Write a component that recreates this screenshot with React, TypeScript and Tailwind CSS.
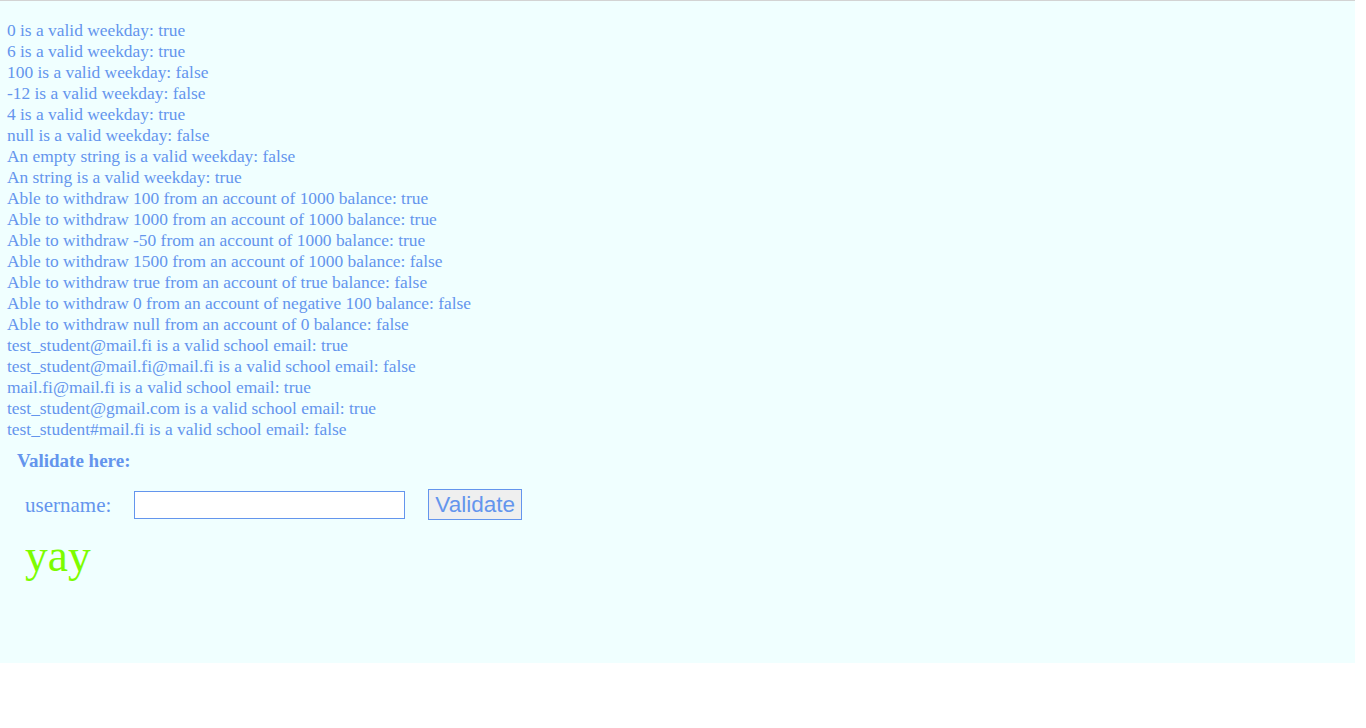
const lines = [
  "0 is a valid weekday: true",
  "6 is a valid weekday: true",
  "100 is a valid weekday: false",
  "-12 is a valid weekday: false",
  "4 is a valid weekday: true",
  "null is a valid weekday: false",
  "An empty string is a valid weekday: false",
  "An string is a valid weekday: true",
  "Able to withdraw 100 from an account of 1000 balance: true",
  "Able to withdraw 1000 from an account of 1000 balance: true",
  "Able to withdraw -50 from an account of 1000 balance: true",
  "Able to withdraw 1500 from an account of 1000 balance: false",
  "Able to withdraw true from an account of true balance: false",
  "Able to withdraw 0 from an account of negative 100 balance: false",
  "Able to withdraw null from an account of 0 balance: false",
  "test_student@mail.fi is a valid school email: true",
  "test_student@mail.fi@mail.fi is a valid school email: false",
  "mail.fi@mail.fi is a valid school email: true",
  "test_student@gmail.com is a valid school email: true",
  "test_student#mail.fi is a valid school email: false",
];

export default function App() {
  return (
    <div className="w-[1355px] h-[663px] bg-[#f0ffff] border-t border-[#d3d3d3] pt-[19px] font-['Liberation_Serif',serif] text-[#6495ed]">
      <div className="pl-[7px]">
        {lines.map((line, i) => (
          <div key={i} className="text-[17.4px] leading-[21px]">
            {line}
          </div>
        ))}
      </div>
      <div className="pl-[17px] mt-[11px] text-[19px] leading-[20px] font-bold">
        Validate here:
      </div>
      <div className="flex items-center pl-[25px] mt-[18px]">
        <label className="text-[21px] leading-[24px]">username:</label>
        <input
          type="text"
          className="ml-[23px] w-[271px] h-[28px] bg-white border border-[#6495ed] outline-none"
        />
        <button className="ml-[23px] h-[31px] px-[6px] bg-[#efefef] border border-[#6495ed] text-[22.5px] leading-[28px] font-['Liberation_Sans',Arial,sans-serif] text-[#6495ed]">
          Validate
        </button>
      </div>
      <div className="pl-[25px] mt-[11px] text-[45.5px] leading-[50px] text-[#7cfc00]">
        yay
      </div>
    </div>
  );
}
